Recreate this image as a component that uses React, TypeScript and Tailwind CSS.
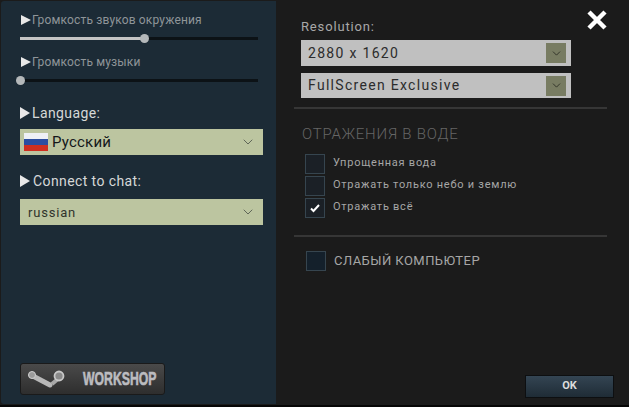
import { ChevronDown } from "lucide-react";

const font = { fontFamily: '"Roboto", "Noto Sans", sans-serif' };

function Arrow() {
  return <span className="mr-[2px] h-0 w-0 shrink-0 border-y-[6px] border-l-[10px] border-y-transparent border-l-[#e8e8e8]" />;
}

function Slider({ label, percent }: { label: string; percent: number }) {
  return (
    <div>
      <div className="flex h-[14px] items-center text-[12px] leading-none tracking-[0.15px] text-[#8f9599]">
        <span className="ml-[1px] mr-[1px] h-0 w-0 shrink-0 border-y-[5px] border-l-[10px] border-y-transparent border-l-[#e8e8e8]" />
        {label}
      </div>
      <div className="relative mt-[10px] h-[3px] w-[238px] bg-[#0c1216]">
        <div className="h-full bg-[#c4c4c4]" style={{ width: `${percent}%` }} />
        <div
          className="absolute top-[-3px] ml-[-4px] h-[9px] w-[9px] rounded-full bg-[#b4b8ba]"
          style={{ left: `${percent}%` }}
        />
      </div>
    </div>
  );
}

function LeftSelect({ children, textClass }: { children: React.ReactNode; textClass: string }) {
  return (
    <div className={`flex h-[26px] w-[243px] items-center justify-between bg-[#bcc5a0] pr-[7px] ${textClass}`}>
      <div className="mt-[1px] flex items-center">{children}</div>
      <ChevronDown size={16} strokeWidth={1.5} className="text-[#5f6658]" />
    </div>
  );
}

function RightSelect({ label, height }: { label: string; height: string }) {
  return (
    <div className={`flex w-[270px] items-center justify-between bg-[#c0c0c0] pl-[7px] pr-[5px] text-[14px] tracking-[1.3px] text-[#2c2c2c] ${height}`}>
      {label}
      <span className="flex h-[20px] w-[20px] items-center justify-center bg-[#787c62]">
        <ChevronDown size={13} strokeWidth={1.5} className="text-[#24261e]" />
      </span>
    </div>
  );
}

function Check({ label, checked }: { label: string; checked?: boolean }) {
  return (
    <div className="flex h-[22px] items-center">
      <span className="flex h-[20px] w-[20px] items-center justify-center border border-[#36454f] bg-[#1b2026]">
        {checked && (
          <svg width="12" height="10" viewBox="0 0 12 10">
            <path d="M2 5.5 L4.5 8 L10 2" fill="none" stroke="#fff" strokeWidth="2" />
          </svg>
        )}
      </span>
      <span className="ml-[8px] mt-[-2px] text-[11px] tracking-[0.75px] text-[#a6a6a6]">{label}</span>
    </div>
  );
}

export default function App() {
  return (
    <div className="h-[407px] w-[629px] overflow-hidden bg-[#060606]" style={font}>
      <div className="flex h-[405px] bg-[#1b1b1b]">
        <div className="ml-[1px] mt-[1px] flex h-[403px] w-[275px] flex-col rounded-bl-[3px] rounded-tl-[3px] bg-[#1c2b36] pl-[19px]">
          <div className="mt-[12px]">
            <Slider label="Громкость звуков окружения" percent={52} />
          </div>
          <div className="mt-[15px]">
            <Slider label="Громкость музыки" percent={0} />
          </div>
          <div className="mt-[22px] flex h-[18px] items-center text-[14px] tracking-[0.4px] text-[#d6d8d8]">
            <Arrow />
            Language:
          </div>
          <div className="mt-[7px]">
            <LeftSelect textClass="text-[15px] text-[#14181a] tracking-[0.2px]">
              <svg width="24" height="18" viewBox="0 0 24 18" className="ml-[4px] mr-[4px] mt-[-1px]">
                <rect width="24" height="6" fill="#eef0f6" />
                <rect y="6" width="24" height="6" fill="#2c4ea0" />
                <rect y="12" width="24" height="6" fill="#cf2f1f" />
              </svg>
              Русский
            </LeftSelect>
          </div>
          <div className="mt-[17px] flex h-[18px] items-center text-[14px] tracking-[0.4px] text-[#d6d8d8]">
            <Arrow />
            <span className="ml-[1px]">Connect to chat:</span>
          </div>
          <div className="mt-[9px]">
            <LeftSelect textClass="text-[13px] tracking-[0.8px] text-[#30342c]">
              <span className="ml-[8px]">russian</span>
            </LeftSelect>
          </div>
          <div className="mt-auto mb-[9px] flex h-[32px] w-[145px] items-center rounded-[3px] border border-[#1a1a1a] bg-gradient-to-b from-[#4a4a4a] to-[#2e2e2e]">
            <svg width="38" height="20" viewBox="0 0 38 20" className="ml-[7px] shrink-0">
              <path d="M3 6 L22 16" stroke="#b8b8b8" strokeWidth="5" strokeLinecap="round" />
              <path d="M24 15 L31 9" stroke="#a8a8a8" strokeWidth="4" />
              <circle cx="4" cy="6" r="3.5" fill="#9c9c9c" stroke="#d0d0d0" />
              <circle cx="31" cy="7" r="4.5" fill="#8a8a8a" stroke="#c8c8c8" strokeWidth="1.8" />
            </svg>
            <span
              className="ml-[17px] origin-left scale-x-[0.68] whitespace-nowrap text-[18px] font-bold leading-none text-[#bcbcc0] [-webkit-text-stroke:0.6px_#bcbcc0]"
              style={{ fontFamily: '"Liberation Sans", sans-serif' }}
            >
              WORKSHOP
            </span>
          </div>
        </div>
        <div className="relative flex flex-1 flex-col pl-[18px]">
          <div className="absolute right-[21px] top-[9px] text-white">
            <svg width="22" height="22" viewBox="0 0 22 22">
              <path d="M3 3 L19 19 M19 3 L3 19" stroke="#fff" strokeWidth="4.5" />
            </svg>
          </div>
          <div className="ml-[7px] mt-[18px] text-[13px] leading-[18px] tracking-[0.85px] text-[#a8a8a8]">Resolution:</div>
          <div className="ml-[7px] mt-[4px]">
            <RightSelect label="2880 x 1620" height="h-[26px]" />
          </div>
          <div className="ml-[7px] mt-[7px]">
            <RightSelect label="FullScreen Exclusive" height="h-[25px]" />
          </div>
          <div className="mt-[9px] h-[2px] w-[313px] bg-[#363636]" />
          <div className="ml-[8px] mt-[15px] text-[15px] leading-[20px] tracking-[0.8px] text-[#666666]" style={{ fontWeight: 300 }}>
            ОТРАЖЕНИЯ В ВОДЕ
          </div>
          <div className="ml-[11px] mt-[9px]">
            <Check label="Упрощенная вода" />
            <Check label="Отражать только небо и землю" />
            <Check label="Отражать всё" checked />
          </div>
          <div className="mt-[16px] h-[2px] w-[313px] bg-[#363636]" />
          <div className="ml-[12px] mt-[14px] flex items-center">
            <span className="h-[20px] w-[20px] border border-[#36454f] bg-[#14202b]" />
            <span className="ml-[8px] text-[13px] tracking-[0.45px] text-[#a6a6a6]">СЛАБЫЙ КОМПЬЮТЕР</span>
          </div>
          <div className="mt-auto mb-[7px] ml-[231px] flex h-[23px] w-[89px] items-center justify-center border border-[#0d0f11] bg-gradient-to-b from-[#344553] to-[#1f2c36] text-[11px] font-bold text-[#dcdcdc]">
            OK
          </div>
        </div>
      </div>
    </div>
  );
}
